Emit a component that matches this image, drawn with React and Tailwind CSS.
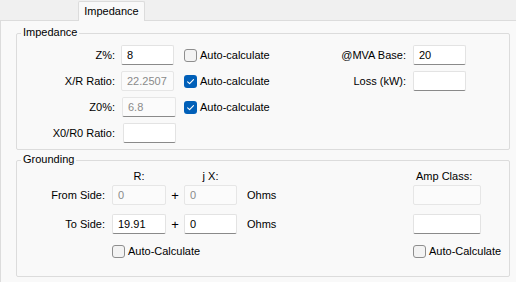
import React from "react";

const Field = ({ value = "", disabled = false, grey = false, className = "" }) => (
  <div
    className={
      disabled
        ? `h-[20px] flex items-center pl-[5px] border border-[#e6e6e6] bg-[#fbfbfb] text-[#8a8a8a] rounded-[2px] ${className}`
        : grey
        ? `h-[20px] flex items-center pl-[5px] border border-[#e6e6e6] border-b-[#8a8a8a] bg-[#fbfbfb] text-[#8a8a8a] rounded-[2px] ${className}`
        : `h-[20px] flex items-center pl-[5px] border border-[#e3e3e3] border-b-[#8a8a8a] bg-white text-black rounded-[2px] ${className}`
    }
  >
    {value}
  </div>
);

const Check = ({ checked = false, className = "" }) =>
  checked ? (
    <div className={`shrink-0 w-[13px] h-[13px] rounded-[3px] bg-[#005fb8] flex items-center justify-center ${className}`}>
      <svg width="13" height="13" viewBox="0 0 13 13">
        <path d="M3.6 6.8 L5.6 8.7 L9.5 4.6" fill="none" stroke="white" strokeWidth="1.1" strokeLinecap="round" strokeLinejoin="round" />
      </svg>
    </div>
  ) : (
    <div className={`shrink-0 w-[13px] h-[13px] rounded-[3px] border border-[#8e8e8e] bg-[#f3f3f3] ${className}`} />
  );

export default function App() {
  return (
    <div
      className="w-[516px] h-[282px] bg-[#f0f0f0] flex flex-col overflow-hidden whitespace-nowrap text-[11px] leading-[13px] text-black"
      style={{ fontFamily: '"Liberation Sans", Arial, sans-serif' }}
    >
      <div className="h-[20px] flex shrink-0">
        <div className="relative z-10 ml-[78px] mt-[1px] h-[20px] w-[67px] border-t border-l border-r border-[#dcdcdc] bg-[#f9f9f9] flex items-center justify-center rounded-t-[2px]">
          Impedance
        </div>
      </div>
      <div className="flex-1 border-t border-l border-[#dcdcdc] bg-[#f9f9f9] pt-[12px] pl-[15px]">
        {/* Impedance group */}
        <div className="relative h-[117px] w-[494px] border border-[#dcdcdc] rounded-[2px]">
          <span className="absolute -top-[8px] left-[4px] px-[2px] bg-[#f9f9f9] leading-[13px]">Impedance</span>
          <div className="flex pt-[11px]">
            <div className="flex flex-col gap-[6px]">
              <div className="flex items-center h-[20px]">
                <span className="w-[98px] text-right">Z%:</span>
                <Field value="8" className="ml-[6px] w-[53px]" />
                <Check className="ml-[10px]" />
                <span className="ml-[3px]">Auto-calculate</span>
              </div>
              <div className="flex items-center h-[20px]">
                <span className="w-[98px] text-right">X/R Ratio:</span>
                <Field value="22.2507" disabled className="ml-[6px] w-[53px]" />
                <Check checked className="ml-[10px]" />
                <span className="ml-[3px]">Auto-calculate</span>
              </div>
              <div className="flex items-center h-[20px]">
                <span className="w-[98px] text-right">Z0%:</span>
                <Field value="6.8" grey className="ml-[7px] w-[54px]" />
                <Check checked className="ml-[8px]" />
                <span className="ml-[3px]">Auto-calculate</span>
              </div>
              <div className="flex items-center h-[20px]">
                <span className="w-[98px] text-right">X0/R0 Ratio:</span>
                <Field className="ml-[8px] w-[53px]" />
              </div>
            </div>
            <div className="ml-auto mr-[43px] flex flex-col gap-[6px]">
              <div className="flex items-center justify-end h-[20px]">
                <span>@MVA Base:</span>
                <Field value="20" className="ml-[7px] w-[53px]" />
              </div>
              <div className="flex items-center justify-end h-[20px]">
                <span>Loss (kW):</span>
                <Field className="ml-[7px] w-[53px]" />
              </div>
            </div>
          </div>
        </div>

        {/* Grounding group */}
        <div className="relative mt-[10px] h-[117px] w-[494px] border border-[#dcdcdc] rounded-[2px]">
          <span className="absolute -top-[8px] left-[4px] px-[2px] bg-[#f9f9f9] leading-[13px]">Grounding</span>
          <div className="flex pt-[8px]">
            <div className="flex flex-col">
              <div className="flex h-[14px] items-center">
                <span className="w-[95px]" />
                <span className="w-[54px] text-center">R:</span>
                <span className="w-[18px]" />
                <span className="w-[53px] text-center">j X:</span>
              </div>
              <div className="mt-[2px] flex items-center h-[20px]">
                <span className="w-[88px] text-right">From Side:</span>
                <Field value="0" disabled className="ml-[7px] w-[54px]" />
                <span className="w-[18px] text-center text-[13px]">+</span>
                <Field value="0" disabled className="w-[53px]" />
                <span className="ml-[10px]">Ohms</span>
              </div>
              <div className="mt-[9px] flex items-center h-[20px]">
                <span className="w-[88px] text-right">To Side:</span>
                <Field value="19.91" className="ml-[7px] w-[54px]" />
                <span className="w-[18px] text-center text-[13px]">+</span>
                <Field value="0" className="w-[53px]" />
                <span className="ml-[10px]">Ohms</span>
              </div>
              <div className="mt-[7px] flex items-center h-[20px] pl-[95px]">
                <Check />
                <span className="ml-[3px]">Auto-Calculate</span>
              </div>
            </div>
            <div className="ml-auto mr-[28px] w-[68px] flex flex-col">
              <div className="h-[14px] flex items-center pl-[3px]">Amp Class:</div>
              <Field disabled className="mt-[2px] w-[68px]" />
              <Field className="mt-[9px] w-[68px]" />
              <div className="mt-[7px] flex items-center h-[20px]">
                <Check />
                <span className="ml-[3px]">Auto-Calculate</span>
              </div>
            </div>
          </div>
        </div>
      </div>
    </div>
  );
}
